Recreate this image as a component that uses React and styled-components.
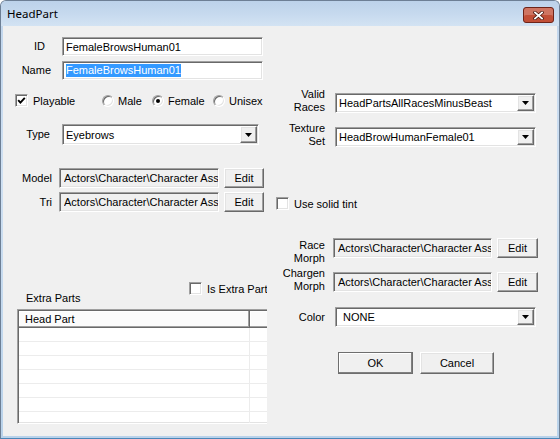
import React from 'react';
import styled, { createGlobalStyle, css } from 'styled-components';

const GlobalStyle = createGlobalStyle`
  html, body { margin: 0; padding: 0; background: #ffffff; }
  body { font-family: "Liberation Sans", Arial, sans-serif; font-size: 11px; color: #000; }
  * { box-sizing: border-box; }
`;

const sunken = css`
  border: 1px solid;
  border-color: #a0a0a0 #ffffff #ffffff #a0a0a0;
  box-shadow: inset 1px 1px 0 #696969, inset -1px -1px 0 #e3e3e3;
`;

const raised = css`
  border: 1px solid;
  border-color: #ffffff #696969 #696969 #ffffff;
  box-shadow: inset -1px -1px 0 #a0a0a0, inset 1px 1px 0 #e3e3e3;
  background: #f0f0f0;
`;

const Window = styled.div`
  width: 560px;
  height: 439px;
  display: flex;
  flex-direction: column;
  border: 1px solid #6d7f95;
  border-bottom-color: #4a86b8;
  border-radius: 6px 6px 0 0;
  background: linear-gradient(180deg, #c0d5ec 0%, #cfe0f2 40%, #b9d2ea 100%);
  overflow: hidden;
`;

const TitleBar = styled.div`
  height: 25px;
  flex-shrink: 0;
  display: flex;
  justify-content: space-between;
  align-items: flex-start;
  padding: 0 5px 0 6px;
  background: linear-gradient(180deg, #bcd2ea 0%, #c6d9ee 50%, #d3e3f3 100%);
`;

const TitleText = styled.span`
  align-self: center;
  font-family: "Noto Sans", "Open Sans", sans-serif;
  font-size: 11.5px;
  color: #000;
`;

const CloseButton = styled.div`
  width: 31px;
  height: 16px;
  margin-top: 6px;
  display: flex;
  align-items: center;
  justify-content: center;
  flex-shrink: 0;
  border: 1px solid #6e2419;
  border-radius: 3px;
  background: #c24f37;
  box-shadow: inset 0 7px 0 rgba(255, 255, 255, 0.22);
`;

const Client = styled.div`
  flex: 1;
  display: flex;
  margin: 0 2px 2px 2px;
  background: #f0f0f0;
`;

const LeftCol = styled.div`
  width: 264px;
  flex-shrink: 0;
  display: flex;
  flex-direction: column;
  overflow: hidden;
`;

const RightCol = styled.div`
  flex: 1;
  min-width: 0;
  display: flex;
  flex-direction: column;
`;

const Row = styled.div`
  display: flex;
  align-items: ${(p) => p.$align || 'center'};
  margin-top: ${(p) => p.$mt || 0}px;
  padding-left: ${(p) => p.$pl || 0}px;
  height: ${(p) => (p.$h ? `${p.$h}px` : 'auto')};
  flex-shrink: 0;
`;

const Label = styled.div`
  width: ${(p) => p.$w}px;
  padding-right: ${(p) => p.$pr || 0}px;
  margin-top: ${(p) => p.$shift || 0}px;
  text-align: right;
  line-height: 13px;
  white-space: nowrap;
  flex-shrink: 0;
`;

const Field = styled.div`
  ${sunken};
  width: ${(p) => p.$w}px;
  height: ${(p) => p.$h}px;
  margin-left: ${(p) => p.$ml || 0}px;
  padding-left: ${(p) => p.$pad || 3}px;
  background: ${(p) => (p.$readOnly ? '#f0f0f0' : '#ffffff')};
  display: flex;
  align-items: center;
  overflow: hidden;
  white-space: nowrap;
  flex-shrink: 0;
`;

const FieldText = styled.span`
  display: block;
  min-width: 0;
  overflow: hidden;
  white-space: nowrap;
`;

const Selected = styled.span`
  background: #3399ff;
  color: #ffffff;
  line-height: 13px;
`;

const Select = styled.div`
  ${sunken};
  width: ${(p) => p.$w}px;
  height: ${(p) => p.$h}px;
  margin-left: ${(p) => p.$ml || 0}px;
  background: #ffffff;
  display: flex;
  align-items: center;
  padding: 1px;
  flex-shrink: 0;
`;

const SelectText = styled.span`
  flex: 1;
  padding-left: ${(p) => p.$pad || 2}px;
  white-space: nowrap;
  overflow: hidden;
`;

const DropButton = styled.div`
  ${raised};
  width: 17px;
  align-self: stretch;
  display: flex;
  align-items: center;
  justify-content: center;
`;

const Button = styled.div`
  ${raised};
  width: ${(p) => p.$w}px;
  height: ${(p) => p.$h}px;
  margin-left: ${(p) => p.$ml || 0}px;
  display: flex;
  align-items: center;
  justify-content: center;
  flex-shrink: 0;
  ${(p) =>
    p.$default &&
    css`
      border-color: #ffffff #404040 #404040 #ffffff;
      outline: 1px solid #6e6e6e;
      outline-offset: -1px;
      box-shadow: inset -1px -1px 0 #808080, inset 1px 1px 0 #ffffff;
    `}
`;

const CheckItem = styled.div`
  display: flex;
  align-items: center;
  gap: ${(p) => p.$gap || 5}px;
  width: ${(p) => (p.$w ? `${p.$w}px` : 'auto')};
  white-space: nowrap;
  flex-shrink: 0;
`;

const CheckBox = styled.div`
  ${sunken};
  width: 13px;
  height: 13px;
  background: #ffffff;
  display: flex;
  align-items: center;
  justify-content: center;
  flex-shrink: 0;
`;

const RadioCircle = styled.div`
  width: 12px;
  height: 12px;
  border-radius: 50%;
  border: 1px solid;
  border-color: #a0a0a0 #ffffff #ffffff #a0a0a0;
  box-shadow: inset 1px 1px 0 #696969, inset -1px -1px 0 #e3e3e3;
  background: #ffffff;
  display: flex;
  align-items: center;
  justify-content: center;
  flex-shrink: 0;
`;

const RadioDot = styled.div`
  width: 4px;
  height: 4px;
  border-radius: 50%;
  background: #000;
`;

const SectionLabel = styled.div`
  margin-top: ${(p) => p.$mt || 0}px;
  padding-left: ${(p) => p.$pl || 0}px;
  line-height: 13px;
`;

const ListView = styled.div`
  ${sunken};
  width: 290px;
  height: 115px;
  margin-top: 4px;
  margin-left: 14px;
  background: #ffffff;
  overflow: hidden;
  flex-shrink: 0;
  padding: 1px 0 0 1px;
`;

const ListHeader = styled.div`
  display: flex;
  height: 17px;
`;

const HeaderCell = styled.div`
  width: ${(p) => p.$w}px;
  height: 17px;
  padding-left: 6px;
  display: flex;
  align-items: center;
  background: #fbfbfb;
  border-right: 1px solid #696969;
  border-bottom: 1px solid #696969;
  box-shadow: inset -1px -1px 0 #a0a0a0, inset 1px 1px 0 #ffffff;
  flex-shrink: 0;
`;

const ListRow = styled.div`
  display: flex;
  height: 14px;
`;

const ListCell = styled.div`
  width: ${(p) => p.$w}px;
  height: 14px;
  border-bottom: 1px solid #ececec;
  border-right: 1px solid #ececec;
  flex-shrink: 0;
`;

const Arrow = () => (
  <svg width="7" height="4" viewBox="0 0 7 4">
    <path d="M0 0 H7 L3.5 4 Z" fill="#000" />
  </svg>
);

const Check = () => (
  <svg width="9" height="9" viewBox="0 0 9 9">
    <path d="M1.2 4.2 L3.4 6.6 L7.8 1.8" fill="none" stroke="#000" strokeWidth="1.9" />
  </svg>
);

const CloseX = () => (
  <svg width="11" height="9" viewBox="0 0 11 9">
    <path d="M2 1.5 L9 7.5 M9 1.5 L2 7.5" stroke="#4a1810" strokeWidth="3.4" strokeLinecap="square" />
    <path d="M2 1.5 L9 7.5 M9 1.5 L2 7.5" stroke="#ffffff" strokeWidth="1.8" strokeLinecap="square" />
  </svg>
);

const Combo = ({ w, h = 20, ml, pad, children }) => (
  <Select $w={w} $h={h} $ml={ml}>
    <SelectText $pad={pad}>{children}</SelectText>
    <DropButton>
      <Arrow />
    </DropButton>
  </Select>
);

const Radio = ({ w, checked, children }) => (
  <CheckItem $w={w} $gap={4}>
    <RadioCircle>{checked && <RadioDot />}</RadioCircle>
    <span>{children}</span>
  </CheckItem>
);

const CheckLabel = ({ w, checked, children }) => (
  <CheckItem $w={w}>
    <CheckBox>{checked && <Check />}</CheckBox>
    <span>{children}</span>
  </CheckItem>
);

const PathField = ({ w, ml }) => (
  <Field $w={w} $h={20} $ml={ml} $readOnly $pad={4}>
    <FieldText>{'Actors\\Character\\Character Ass'}</FieldText>
  </Field>
);

export default function App() {
  const rows = Array.from({ length: 7 });
  return (
    <>
      <GlobalStyle />
      <Window>
        <TitleBar>
          <TitleText>HeadPart</TitleText>
          <CloseButton>
            <CloseX />
          </CloseButton>
        </TitleBar>
        <Client>
          <LeftCol>
            <Row $mt={11}>
              <Label $w={59} $pr={17}>ID</Label>
              <Field $w={201} $h={19}>FemaleBrowsHuman01</Field>
            </Row>
            <Row $mt={5}>
              <Label $w={59} $pr={11}>Name</Label>
              <Field $w={201} $h={19}>
                <Selected>FemaleBrowsHuman01</Selected>
              </Field>
            </Row>
            <Row $mt={14} $pl={12} $h={13}>
              <CheckLabel w={87} checked>Playable</CheckLabel>
              <Radio w={50}>Male</Radio>
              <Radio w={61} checked>Female</Radio>
              <Radio>Unisex</Radio>
            </Row>
            <Row $mt={17}>
              <Label $w={59} $pr={12}>Type</Label>
              <Combo w={197} h={21}>Eyebrows</Combo>
            </Row>
            <Row $mt={23}>
              <Label $w={56} $pr={7}>Model</Label>
              <PathField w={160} />
              <Button $w={40} $h={20} $ml={5}>Edit</Button>
            </Row>
            <Row $mt={4}>
              <Label $w={56} $pr={7}>Tri</Label>
              <PathField w={160} />
              <Button $w={40} $h={20} $ml={5}>Edit</Button>
            </Row>
            <Row $mt={70} $pl={186} $h={13}>
              <CheckLabel>Is Extra Part</CheckLabel>
            </Row>
            <SectionLabel $mt={-3} $pl={23}>Extra Parts</SectionLabel>
            <ListView>
              <ListHeader>
                <HeaderCell $w={231}>Head Part</HeaderCell>
                <HeaderCell $w={60} />
              </ListHeader>
              {rows.map((_, i) => (
                <ListRow key={i}>
                  <ListCell $w={231} />
                  <ListCell $w={60} />
                </ListRow>
              ))}
            </ListView>
          </LeftCol>

          <RightCol>
            <Row $mt={67} $align="flex-start" $h={20}>
              <Label $w={58} $shift={-5}>
                Valid
                <br />
                Races
              </Label>
              <Combo w={201} h={20} ml={10}>HeadPartsAllRacesMinusBeast</Combo>
            </Row>
            <Row $mt={14} $align="flex-start" $h={20}>
              <Label $w={58} $shift={-5}>
                Texture
                <br />
                Set
              </Label>
              <Combo w={201} h={20} ml={10}>HeadBrowHumanFemale01</Combo>
            </Row>
            <Row $mt={50} $pl={9} $h={13}>
              <CheckLabel>Use solid tint</CheckLabel>
            </Row>
            <Row $mt={28} $align="flex-start" $h={20}>
              <Label $w={58} $shift={1}>
                Race
                <br />
                Morph
              </Label>
              <PathField w={159} ml={8} />
              <Button $w={41} $h={20} $ml={5}>Edit</Button>
            </Row>
            <Row $mt={14} $align="flex-start" $h={20}>
              <Label $w={58} $shift={-5}>
                Chargen
                <br />
                Morph
              </Label>
              <PathField w={159} ml={8} />
              <Button $w={41} $h={20} $ml={5}>Edit</Button>
            </Row>
            <Row $mt={15} $h={20}>
              <Label $w={58}>Color</Label>
              <Combo w={201} h={20} ml={10} pad={6}>NONE</Combo>
            </Row>
            <Row $mt={25} $pl={71}>
              <Button $w={75} $h={22} $default>OK</Button>
              <Button $w={74} $h={22} $ml={7}>Cancel</Button>
            </Row>
          </RightCol>
        </Client>
      </Window>
    </>
  );
}
